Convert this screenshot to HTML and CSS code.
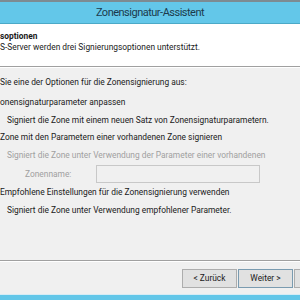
FILE: index.html
```html
<!DOCTYPE html>
<html lang="de">
<head>
    <meta charset="UTF-8">
    <title>Zonensignatur-Assistent</title>
    <link rel="stylesheet" href="styles.css">
</head>
<body>
    <div class="window">
        <div class="top-strip"></div>
        <div class="titlebar">Zonensignatur-Assistent</div>

        <div class="header">
            <div class="header-title">soptionen</div>
            <div class="header-sub">S-Server werden drei Signierungsoptionen unterstützt.</div>
        </div>

        <div class="content">
            <p class="intro">Sie eine der Optionen für die Zonensignierung aus:</p>

            <div class="row">onensignaturparameter anpassen</div>
            <div class="row desc">Signiert die Zone mit einem neuen Satz von Zonensignaturparametern.</div>

            <div class="row">Zone mit den Parametern einer vorhandenen Zone signieren</div>
            <div class="row desc disabled">Signiert die Zone unter Verwendung der Parameter einer vorhandenen</div>
            <div class="zone-row">
                <label class="disabled" for="zoneName">Zonenname:</label>
                <input type="text" id="zoneName" disabled>
            </div>

            <div class="row">Empfohlene Einstellungen für die Zonensignierung verwenden</div>
            <div class="row desc">Signiert die Zone unter Verwendung empfohlener Parameter.</div>
        </div>

        <div class="footer">
            <button class="btn">&lt; Zurück</button>
            <button class="btn btn-default">Weiter &gt;</button>
            <button class="btn"></button>
        </div>
        <div class="bottom-edge"></div>
    </div>
</body>
</html>
```
FILE: styles.css
```css
body {
    margin: 0;
    width: 300px;
    height: 300px;
    overflow: hidden;
    font-family: Roboto, "Liberation Sans", sans-serif;
    font-size: 8.4px;
    color: #1a1a1a;
    background-color: #f0f0f0;
}

.window {
    display: flex;
    flex-direction: column;
    height: 300px;
}

.top-strip {
    height: 2px;
    background-color: #7d8b92;
}

.titlebar {
    height: 21px;
    line-height: 21px;
    text-align: center;
    font-size: 11px;
    letter-spacing: -0.5px;
    color: #1c3a4c;
    background-color: #63c7e9;
    border-bottom: 1px solid #4ba9c7;
}

.header {
    height: 43px;
    padding-top: 7px;
    box-sizing: border-box;
    background-color: #fff;
    border-bottom: 1px solid #a0a0a0;
}

.header-title {
    font-weight: bold;
    line-height: 11px;
}

.header-sub {
    line-height: 11px;
}

.content {
    flex: 1;
    padding-top: 8px;
    border-top: 1px solid #fff;
    border-bottom: 1px solid #a0a0a0;
}

.intro {
    margin: 0 0 6px;
    line-height: 12px;
}

.row {
    height: 17.5px;
    line-height: 17.5px;
    white-space: nowrap;
}

.desc {
    padding-left: 7px;
}

.disabled {
    color: #a0a0a0;
}

.zone-row {
    display: flex;
    align-items: center;
    gap: 25px;
    height: 20px;
    padding-left: 25px;
}

.zone-row input {
    width: 164px;
    height: 18px;
    box-sizing: border-box;
    margin: 0;
    border: 1px solid #c8c8c8;
    background-color: #f0f0f0;
}

.footer {
    height: 32px;
    display: flex;
    align-items: center;
    gap: 1px;
    padding-left: 182px;
    border-top: 1px solid #fff;
}

.btn {
    flex: none;
    width: 55px;
    height: 19px;
    padding: 0;
    font-family: inherit;
    font-size: 8.4px;
    color: #1a1a1a;
    background-color: #e1e1e1;
    border: 1px solid #adadad;
}

.btn-default {
    border-color: #7a9bb0;
}

.bottom-edge {
    height: 5px;
    background-color: #62c6e8;
    border-top: 1px solid #d6ecf5;
}
```
